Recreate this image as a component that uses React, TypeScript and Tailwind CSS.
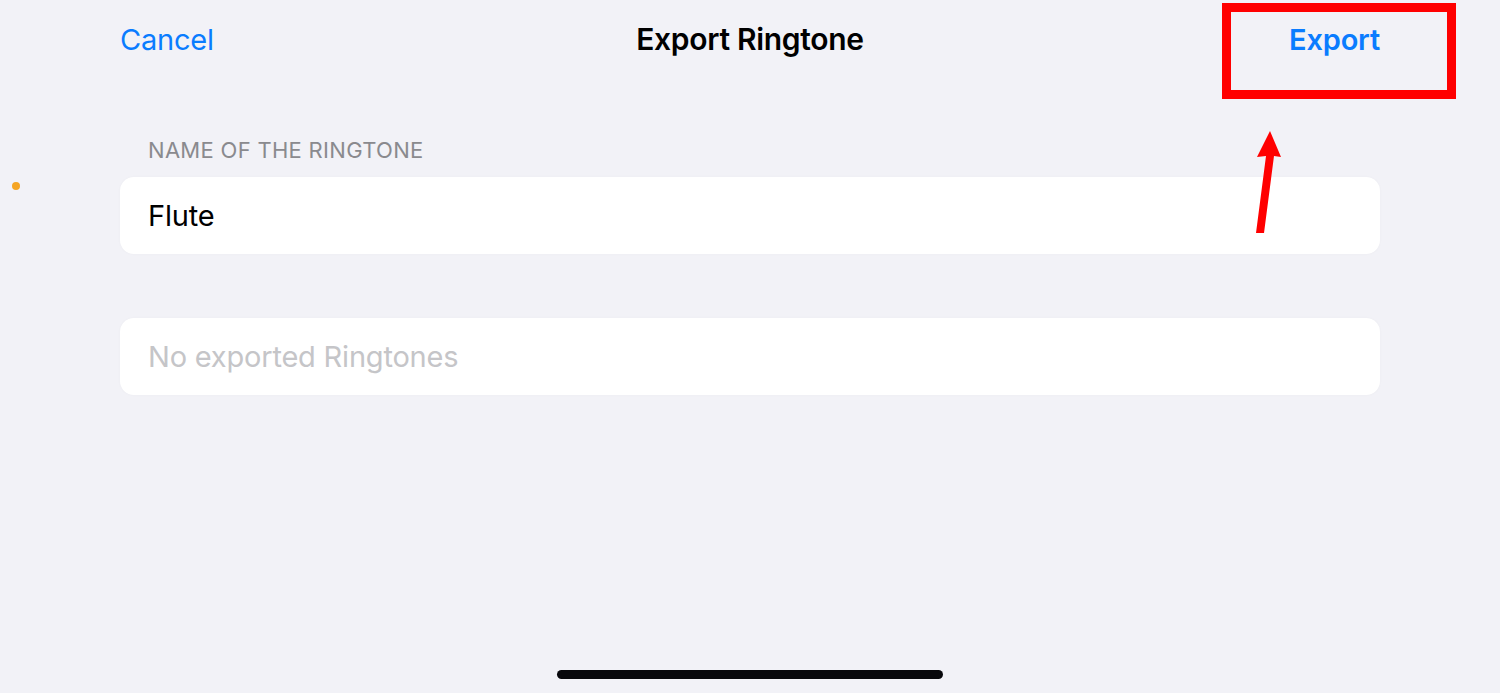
import React from "react"

const font = { fontFamily: "Inter, 'Noto Sans', sans-serif" }

function Card({ children }: { children: React.ReactNode }) {
  return (
    <div className="flex h-[77px] items-center rounded-[14px] bg-white px-[28px] shadow-[0_0_3px_rgba(0,0,0,0.03)]">
      {children}
    </div>
  )
}

export default function App() {
  return (
    <div className="relative flex h-[693px] w-full flex-col overflow-hidden bg-[#f2f2f7]" style={font}>
      {/* nav bar */}
      <div className="relative flex h-[78px] items-center justify-between px-[120px]">
        <button className="text-[29px] leading-none tracking-[-0.2px] text-[#0a7cff]">Cancel</button>
        <div className="absolute left-1/2 -translate-x-1/2 text-[30px] font-semibold leading-none tracking-[-0.3px] text-black">
          Export Ringtone
        </div>
        <button className="text-[29px] font-semibold leading-none tracking-[-0.2px] text-[#0a7cff]">Export</button>
      </div>

      {/* form */}
      <div className="flex flex-col px-[120px] pt-[60px]">
        <div className="mb-[15px] pl-[28px] text-[22px] leading-[24px] tracking-[0.3px] text-[#8a8a8e]">
          NAME OF THE RINGTONE
        </div>
        <Card>
          <span className="text-[29px] leading-none tracking-[-0.2px] text-black">Flute</span>
        </Card>
        <div className="h-[64px]" />
        <Card>
          <span className="text-[29px] leading-none tracking-[-0.2px] text-[#c5c5c8]">No exported Ringtones</span>
        </Card>
      </div>

      {/* home indicator */}
      <div className="mt-auto mb-[14px] flex justify-center">
        <div className="h-[9px] w-[386px] rounded-full bg-[#08080c]" />
      </div>

      {/* annotation: orange dot */}
      <div className="absolute left-[12px] top-[182px] h-[8px] w-[8px] rounded-full bg-[#f5a524]" />

      {/* annotation: red box */}
      <div className="absolute left-[1222px] top-[3px] h-[96px] w-[234px] border-[9px] border-[#ff0000]" />

      {/* annotation: red arrow */}
      <svg className="absolute left-[1245px] top-[125px]" width="45" height="115" viewBox="0 0 45 115">
        <polygon points="25,6 36,32 29,31 19,108 11,108 21,31 12,32" fill="#ff0000" />
      </svg>
    </div>
  )
}
